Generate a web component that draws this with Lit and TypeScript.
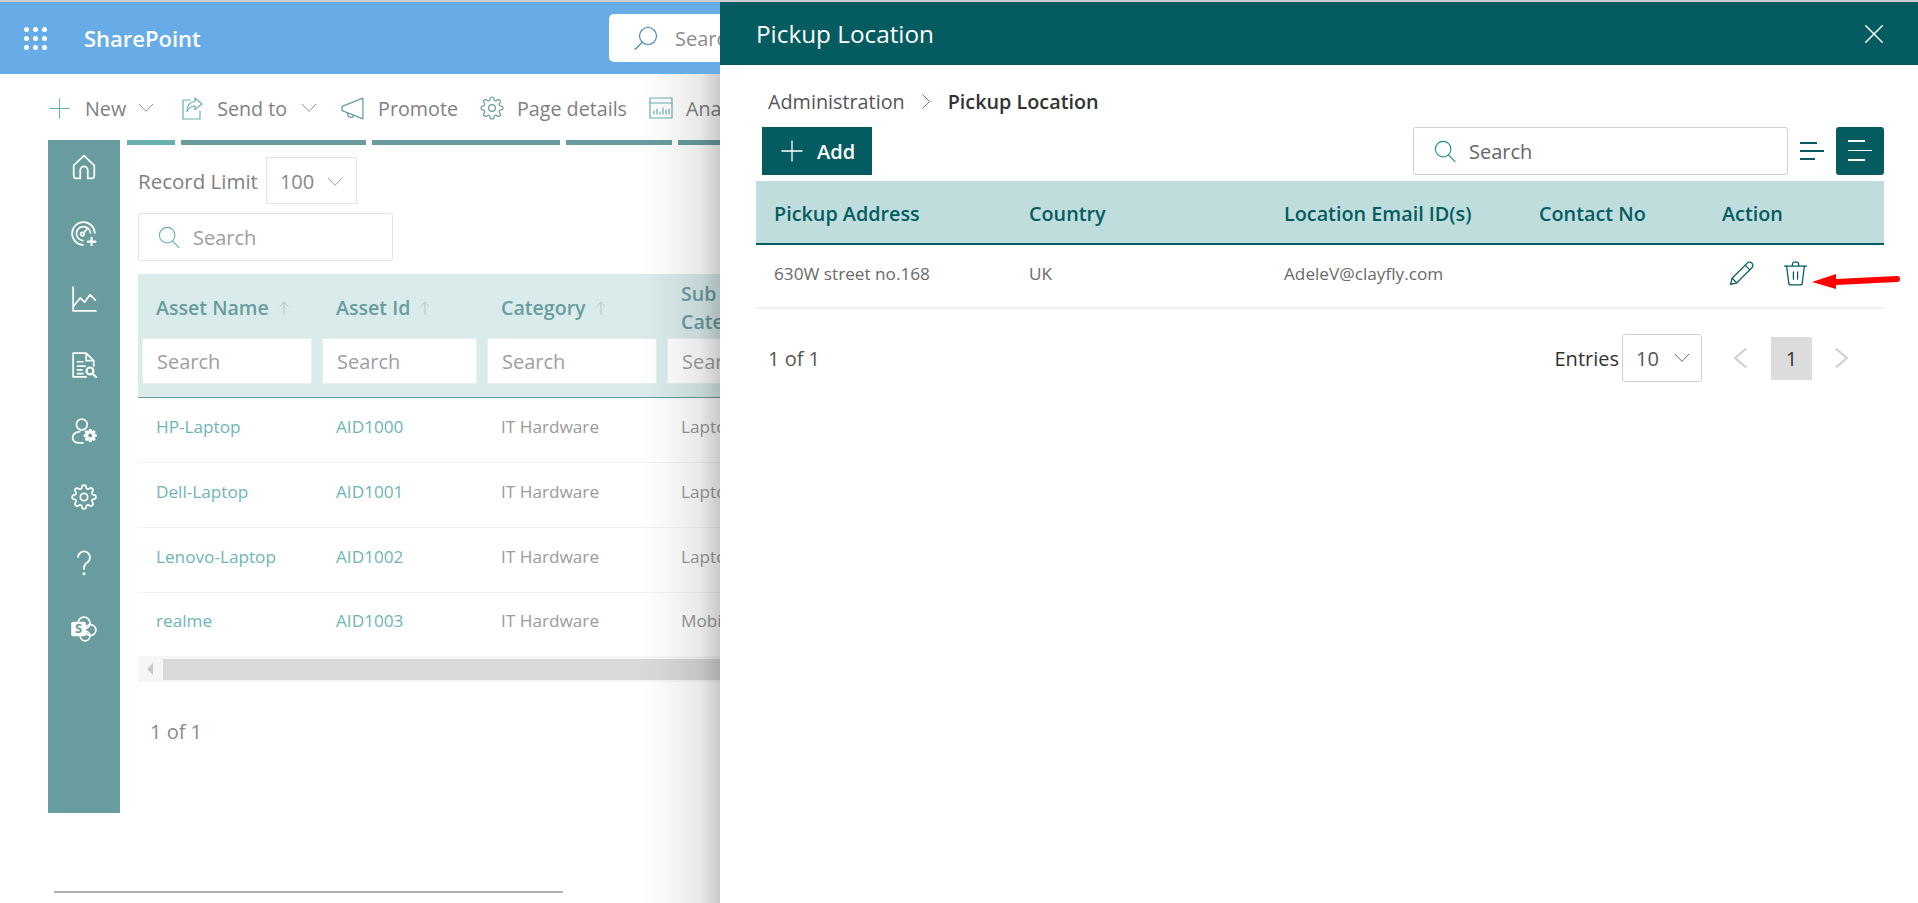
import {LitElement, html, css, svg} from 'lit';
import {customElement} from 'lit/decorators.js';

const gearPath = 'M19.4 15a1.65 1.65 0 0 0 .33 1.82l.06.06a2 2 0 0 1 0 2.83 2 2 0 0 1-2.83 0l-.06-.06a1.65 1.65 0 0 0-1.82-.33 1.65 1.65 0 0 0-1 1.51V21a2 2 0 0 1-2 2 2 2 0 0 1-2-2v-.09A1.65 1.65 0 0 0 9 19.4a1.65 1.65 0 0 0-1.82.33l-.06.06a2 2 0 0 1-2.83 0 2 2 0 0 1 0-2.83l.06-.06a1.65 1.65 0 0 0 .33-1.82 1.65 1.65 0 0 0-1.51-1H3a2 2 0 0 1-2-2 2 2 0 0 1 2-2h.09A1.65 1.65 0 0 0 4.6 9a1.65 1.65 0 0 0-.33-1.82l-.06-.06a2 2 0 0 1 0-2.83 2 2 0 0 1 2.83 0l.06.06a1.65 1.65 0 0 0 1.82.33H9a1.65 1.65 0 0 0 1-1.51V3a2 2 0 0 1 2-2 2 2 0 0 1 2 2v.09a1.65 1.65 0 0 0 1 1.51 1.65 1.65 0 0 0 1.82-.33l.06-.06a2 2 0 0 1 2.83 0 2 2 0 0 1 0 2.83l-.06.06a1.65 1.65 0 0 0-.33 1.82V9a1.65 1.65 0 0 0 1.51 1H21a2 2 0 0 1 2 2 2 2 0 0 1-2 2h-.09a1.65 1.65 0 0 0-1.51 1z';

const icon = (size: number, color: string, body: unknown, sw = 1.2) => html`
  <svg width=${size} height=${size} viewBox="0 0 24 24" fill="none" stroke=${color} stroke-width=${sw}
    stroke-linecap="round" stroke-linejoin="round">${body}</svg>`;

const plus = svg`<path d="M12 1v22M1 12h22"/>`;
const chevronDown = svg`<path d="M3 7l9 9.500 9-9.500"/>`;
const upArrow = svg`<path d="M12 23V2M5 9l7-7 7 7"/>`;
const searchGlass = svg`<circle cx="10" cy="10" r="8.5"/><path d="M16 16.5l7 7"/>`;
const searchFlip = svg`<circle cx="14" cy="10" r="8.5"/><path d="M8 16.5l-7 7"/>`;
const gear = svg`<circle cx="12" cy="12" r="3.4"/><path d=${gearPath}/>`;
const send = svg`<path d="M10 4H3v19h17v-8"/><path d="M22 8l-7-6v3.5c-6 .5-8 5-8 10 2-4 4-5.500 8-5.500V13.500z"/>`;
const promote = svg`<path d="M22 2L2 10v4l20 8z"/><path d="M7 16l1 4 4 .5 1-2.500"/>`;
const analytics = svg`<rect x="1" y="2" width="22" height="20"/><path d="M1 7h22M5 18v-3M8 18v-5M11 18v-2M14 18v-6M17 18v-4M20 18v-5"/>`;

const home = svg`<path d="M12 1.500L2.500 10.500V20a2.500 2.500 0 0 0 2.500 2.500h3.500V15a3.500 3.500 0 0 1 7 0v7.500H19a2.500 2.500 0 0 0 2.500-2.500v-9.500z"/>`;
const gauge = svg`<path d="M11 23a10.500 10.500 0 1 1 11-11"/><path d="M11 19a6.500 6.500 0 1 1 7-7"/><circle cx="10.500" cy="13" r="1.600"/><path d="M12 11.500l3.500-4"/><path d="M19 16.500v7M15.500 20h7" stroke-width="2"/>`;
const chart = svg`<path d="M2 1v22h21"/><path d="M2.500 18.500l6-7.500 4 4 5-7 5 5"/>`;
const report = svg`<path d="M2 1h12l7 7v5M14 1v7h7M2 1v22h12"/><path d="M6 9h5M6 13h7M6 16.500h4M6 20h5"/><circle cx="17.500" cy="17.500" r="3.200" stroke-width="2"/><path d="M20 20l3.500 3.500" stroke-width="2"/>`;
const userGear = svg`<circle cx="10" cy="6" r="5"/><path d="M8 12.500c-4 .5-6.500 2.500-6.500 5.500 0 3 2.500 5 6.500 5h3"/>
  <g transform="translate(11.500 10) scale(.52)"><path d=${gearPath} fill="#fff" stroke="#fff" stroke-width="2"/><circle cx="12" cy="12" r="3.500" fill="#689c9e" stroke="none"/></g>`;
const help = svg`<path d="M6.500 6.500a5.500 5.500 0 1 1 8.500 5c-2 1.300-3 2.500-3 5v1"/><circle cx="12" cy="22" r=".6" fill="#fff"/>`;
const spLogo = svg`<circle cx="12" cy="6.500" r="5.500"/><circle cx="18" cy="13" r="5"/><circle cx="13" cy="18.500" r="4.500"/><rect x="1" y="6" width="12" height="12" rx="1" fill="#fff" stroke="#fff"/>
  <text x="7" y="16" text-anchor="middle" font-size="12" font-weight="700" fill="#689c9e" stroke="none" font-family="Open Sans, sans-serif">S</text>`;
const pencil = svg`<path d="M1.500 22.500l1.500-6L17.500 2a3 3 0 0 1 4.500 4.500L7.500 21z"/><path d="M15.500 4l4.500 4.500M3 16.500l4.500 4.500"/>`;
const trash = svg`<path d="M1.500 5h21M9 4.500V3a2 2 0 0 1 2-2h2a2 2 0 0 1 2 2v1.500"/><path d="M3.500 5l2 16a2 2 0 0 0 2 2h9a2 2 0 0 0 2-2l2-16"/><path d="M10 10.500v7M14 10.500v7"/>`;

@customElement('app-root')
export class AppRoot extends LitElement {
  static styles = css`
    :host {
      display: block;
      position: relative;
      width: 1918px;
      height: 903px;
      overflow: hidden;
      background: #fff;
      font-family: 'Open Sans', 'Noto Sans', sans-serif;
      color: #333;
    }
    svg { display: block; flex: none; }

    .topline { height: 2px; background: #cfcfcf; }

    .suite {
      height: 72px;
      background: #67ace7;
      display: flex;
      align-items: center;
      color: #fff;
    }
    .waffle {
      margin-left: 24px;
      display: grid;
      grid-template-columns: repeat(3, 5px);
      gap: 4px;
    }
    .waffle i { width: 5px; height: 5px; border-radius: 50%; background: #fff; }
    .suite-name {
      width: 117px;
      margin-left: 37px;
      font-size: 22px;
      font-weight: 600;
    }
    .suite-search {
      margin-left: 408px;
      width: 480px;
      height: 48px;
      background: #fff;
      border-radius: 5px;
      display: flex;
      align-items: center;
      gap: 17px;
      padding-left: 25px;
      box-sizing: border-box;
      font-size: 20px;
      color: #8c8c8c;
    }

    .cmdbar {
      height: 66px;
      padding-top: 2px;
      box-sizing: border-box;
      display: flex;
      align-items: center;
      padding-left: 49px;
      font-size: 19.7px;
      color: #7f7f7f;
      white-space: nowrap;
    }
    .cmd { display: flex; align-items: center; gap: 13px; margin-right: 22px; }
    .cmd.new { margin-right: 25px; }
    .cmd.new span { margin: 0 -2px 0 2px; }

    .page { display: flex; padding-left: 48px; }
    .side {
      width: 72px;
      height: 673px;
      background: #689c9e;
      display: flex;
      flex-direction: column;
      align-items: center;
      gap: 40px;
      padding-top: 14px;
      box-sizing: border-box;
    }
    .main { margin-left: 7px; width: 620px; }
    .tabs { display: flex; gap: 6px; height: 5px; }
    .tabs i { background: #689c9e; height: 5px; }
    .tabs i:first-child { background: #6aafb0; }

    .inner { margin-left: 11px; }
    .limit {
      margin-top: 12px;
      display: flex;
      align-items: center;
      gap: 8px;
      font-size: 20.5px;
      color: #7f7f7f;
    }
    .limit-select {
      width: 91px;
      height: 47px;
      box-sizing: border-box;
      border: 1px solid #e4e4e4;
      display: flex;
      align-items: center;
      justify-content: space-between;
      padding: 2px 12px 0 13px;
      font-size: 20px;
      color: #888;
    }
    .left-search {
      margin-top: 9px;
      width: 255px;
      height: 48px;
      box-sizing: border-box;
      border: 1px solid #e4e4e4;
      border-radius: 3px;
      display: flex;
      align-items: center;
      gap: 13px;
      padding-left: 19px;
      font-size: 20px;
      color: #9e9e9e;
    }

    .grid { display: grid; grid-template-columns: 180px 165px 180px 1fr; }
    .thead {
      margin-top: 13px;
      height: 124px;
      background: #daebeb;
      border-bottom: 1px solid #689c9e;
      box-sizing: border-box;
      grid-template-rows: 64px 46px;
    }
    .th {
      padding: 4px 0 0 18px;
      align-self: center;
      display: flex;
      align-items: center;
      gap: 8px;
      font-size: 19.6px;
      font-weight: 550;
      color: #689c9e;
      line-height: 28px;
      white-space: nowrap;
    }
    .filter {
      margin-left: 4px;
      height: 46px;
      box-sizing: border-box;
      background: #fff;
      border: 1px solid #e6eeee;
      padding-left: 14px;
      display: flex;
      align-items: center;
      font-size: 20px;
      color: #9e9e9e;
    }
    .row {
      height: 65px;
      padding-bottom: 7px;
      align-items: center;
      border-bottom: 1px solid #f2f2f2;
      box-sizing: border-box;
      font-size: 17.2px;
      color: #9a9a9a;
    }
    .row.last { border-bottom: none; height: 63px; padding-bottom: 8px; }
    .row span { padding-left: 18px; white-space: nowrap; }
    .row .link { color: #6fb5b5; }

    .scroll {
      height: 26px;
      background: #f6f6f6;
      display: flex;
      align-items: center;
      width: 600px;
    }
    .scroll b {
      width: 0;
      height: 0;
      margin-left: 9px;
      border-style: solid;
      border-width: 6px 6px 6px 0;
      border-color: transparent #c8c8c8 transparent transparent;
    }
    .scroll i { margin-left: 10px; height: 21px; flex: 1; background: #d9d9d9; }
    .left-count { margin: 36px 0 0 12px; font-size: 20px; color: #8a8a8a; }

    .rule {
      position: absolute;
      left: 54px;
      top: 891px;
      width: 509px;
      height: 2px;
      background: #b0b0b0;
    }

    /* soft fade the panel throws on the page below the suite bar */
    .shade {
      position: absolute;
      left: 640px;
      top: 74px;
      bottom: 0;
      width: 80px;
      background: linear-gradient(to right,
        rgba(0, 0, 0, 0) 0%,
        rgba(0, 0, 0, 0.02) 25%,
        rgba(0, 0, 0, 0.05) 50%,
        rgba(0, 0, 0, 0.09) 75%,
        rgba(0, 0, 0, 0.21) 100%);
    }

    /* side panel sits over the page */
    .panel {
      position: absolute;
      left: 720px;
      top: 2px;
      right: 0;
      bottom: 0;
      background: #fff;
    }
    .panel-head {
      height: 63px;
      background: #045c60;
      color: #fff;
      display: flex;
      align-items: center;
      justify-content: space-between;
      padding: 0 33px 0 36px;
      font-size: 24.3px;
    }
    .crumbs {
      height: 62px;
      padding: 10px 0 0 48px;
      display: flex;
      align-items: center;
      font-size: 19.8px;
      color: #555;
      box-sizing: border-box;
    }
    .crumbs .sep { margin: 0 14px; }
    .crumbs strong { font-weight: 550; color: #323232; }
    .tools {
      display: flex;
      align-items: center;
      padding: 0 34px 0 42px;
      height: 48px;
    }
    .add {
      width: 110px;
      height: 48px;
      background: #045c60;
      color: #fff;
      display: flex;
      align-items: center;
      gap: 14px;
      padding-left: 19px;
      box-sizing: border-box;
      font-size: 20px;
      font-weight: 550;
    }
    .search {
      margin-left: auto;
      width: 375px;
      height: 48px;
      box-sizing: border-box;
      border: 1px solid #cfcfcf;
      border-radius: 3px;
      display: flex;
      align-items: center;
      gap: 13px;
      padding-left: 20px;
      font-size: 20px;
      color: #666;
    }
    .align { margin-left: 12px; width: 24px; display: grid; gap: 6.5px; }
    .align i { height: 1.5px; background: #045c60; }
    .align.on {
      margin-left: 12px;
      width: 48px;
      height: 48px;
      box-sizing: border-box;
      padding: 13px 12px;
      background: #045c60;
      border-radius: 3px;
      gap: 7px;
    }
    .align.on i { background: #fff; }

    .dt { margin: 6px 34px 0 36px; }
    .dt-grid { display: grid; grid-template-columns: 255px 255px 255px 183px 1fr; }
    .dt-head {
      height: 64px;
      padding-top: 2px;
      background: #bfdddd;
      border-bottom: 2px solid #045c60;
      box-sizing: border-box;
      align-items: center;
      font-size: 19.8px;
      font-weight: 550;
      color: #045c60;
    }
    .dt-head span, .dt-row span { padding-left: 18px; white-space: nowrap; }
    .dt-row {
      height: 64px;
      padding-bottom: 5px;
      align-items: center;
      border-bottom: 2px solid #f2f2f2;
      box-sizing: border-box;
      font-size: 17.2px;
      color: #6a6a6a;
    }
    .actions { display: flex; align-items: center; gap: 29px; padding-left: 25px; }
    .foot {
      height: 98px;
      display: flex;
      align-items: center;
      padding: 0 66px 0 48px;
      font-size: 20px;
      color: #555;
    }
    .entries { margin-left: auto; color: #333; font-weight: 500; }
    .foot-select {
      margin-left: 3px;
      width: 80px;
      height: 48px;
      box-sizing: border-box;
      border: 1px solid #d2d2d2;
      border-radius: 3px;
      display: flex;
      align-items: center;
      justify-content: space-between;
      padding: 0 10px 0 13px;
    }
    .pager { display: flex; align-items: center; margin-left: 28px; }
    .pager b {
      width: 41px;
      height: 43px;
      margin: 0 20px 0 21px;
      background: #dcdcdc;
      display: flex;
      align-items: center;
      justify-content: center;
      font-weight: 400;
      color: #333;
    }
    .arrow { position: absolute; left: 1811px; top: 259px; }
  `;

  render() {
    const teal = '#6aafb0';
    const rows = [
      ['HP-Laptop', 'AID1000', 'IT Hardware', 'Laptop'],
      ['Dell-Laptop', 'AID1001', 'IT Hardware', 'Laptop'],
      ['Lenovo-Laptop', 'AID1002', 'IT Hardware', 'Laptop'],
      ['realme', 'AID1003', 'IT Hardware', 'Mobile'],
    ];
    return html`
      <div class="topline"></div>
      <div class="suite">
        <div class="waffle">${Array.from({length: 9}, () => html`<i></i>`)}</div>
        <div class="suite-name">SharePoint</div>
        <div class="suite-search">${icon(24, '#4a86c0', searchFlip)}<span>Search</span></div>
      </div>

      <div class="cmdbar">
        <div class="cmd new">${icon(21, teal, plus)}<span>New</span>${icon(18, '#8a8a8a', chevronDown)}</div>
        <div class="cmd">${icon(24, teal, send)}<span>Send to</span>${icon(18, '#8a8a8a', chevronDown)}</div>
        <div class="cmd">${icon(25, '#689c9e', promote)}<span>Promote</span></div>
        <div class="cmd">${icon(24, '#689c9e', gear)}<span>Page details</span></div>
        <div class="cmd">${icon(24, teal, analytics)}<span>Analytics</span></div>
      </div>

      <div class="page">
        <nav class="side">
          ${[home, gauge, chart, report, userGear, gear, help, spLogo].map(i => icon(26, '#fff', i, 1.6))}
        </nav>
        <div class="main">
          <div class="tabs">
            <i style="width:48px"></i><i style="width:185px"></i><i style="width:188px"></i><i style="width:106px"></i><i style="width:60px"></i>
          </div>
          <div class="inner">
            <div class="limit">
              <span>Record Limit</span>
              <div class="limit-select"><span>100</span>${icon(18, '#9a9a9a', chevronDown)}</div>
            </div>
            <div class="left-search">${icon(22, teal, searchGlass)}<span>Search</span></div>

            <div class="grid thead">
              <div class="th">Asset Name ${icon(14, '#9fb5b5', upArrow)}</div>
              <div class="th">Asset Id ${icon(14, '#9fb5b5', upArrow)}</div>
              <div class="th">Category ${icon(14, '#9fb5b5', upArrow)}</div>
              <div class="th">Sub<br />Category</div>
              <div class="filter" style="width:170px">Search</div>
              <div class="filter" style="width:155px">Search</div>
              <div class="filter" style="width:170px">Search</div>
              <div class="filter" style="width:169px">Search</div>
            </div>
            ${rows.map((r, i) => html`
              <div class="grid row ${i === rows.length - 1 ? 'last' : ''}">
                <span class="link">${r[0]}</span><span class="link">${r[1]}</span><span>${r[2]}</span><span>${r[3]}</span>
              </div>`)}
            <div class="scroll"><b></b><i></i></div>
            <div class="left-count">1 of 1</div>
          </div>
        </div>
      </div>
      <div class="rule"></div>
      <div class="shade"></div>

      <section class="panel">
        <header class="panel-head">
          <span>Pickup Location</span>
          ${icon(22, '#fff', svg`<path d="M3 3l18 18M21 3L3 21"/>`, 1.6)}
        </header>
        <div class="crumbs">
          <span>Administration</span>
          <span class="sep">${icon(15, '#555', svg`<path d="M6 1l11 11L6 23"/>`, 1.4)}</span>
          <strong>Pickup Location</strong>
        </div>
        <div class="tools">
          <div class="add">${icon(22, '#fff', plus, 1.4)}<span>Add</span></div>
          <div class="search">${icon(22, '#1f8a8f', searchGlass)}<span>Search</span></div>
          <div class="align"><i style="width:17px"></i><i></i><i style="width:15px"></i></div>
          <div class="align on"><i style="width:17px"></i><i></i><i style="width:17px"></i></div>
        </div>
        <div class="dt">
          <div class="dt-grid dt-head">
            <span>Pickup Address</span><span>Country</span><span>Location Email ID(s)</span><span>Contact No</span><span>Action</span>
          </div>
          <div class="dt-grid dt-row">
            <span>630W street no.168</span><span>UK</span><span>AdeleV@clayfly.com</span><span></span>
            <div class="actions">
              ${icon(25, '#045c60', pencil, 1.2)}
              ${icon(25, '#045c60', trash, 1.2)}
            </div>
          </div>
        </div>
        <div class="foot">
          <span>1 of 1</span>
          <span class="entries">Entries</span>
          <div class="foot-select"><span>10</span>${icon(18, '#555', chevronDown)}</div>
          <div class="pager">
            ${icon(20, '#cfcfcf', svg`<path d="M18.500 1.500L6 12l12.500 10.500"/>`, 2.6)}
            <b>1</b>
            ${icon(20, '#cfcfcf', svg`<path d="M5.500 1.500L18 12 5.500 22.500"/>`, 2.6)}
          </div>
        </div>
      </section>

      <svg class="arrow" width="92" height="34" viewBox="0 0 92 34">
        <path d="M1 23L25 15V20L86 17a3 3 0 0 1 0 6L25 26V30z" fill="#ff0000"/>
      </svg>
    `;
  }
}
